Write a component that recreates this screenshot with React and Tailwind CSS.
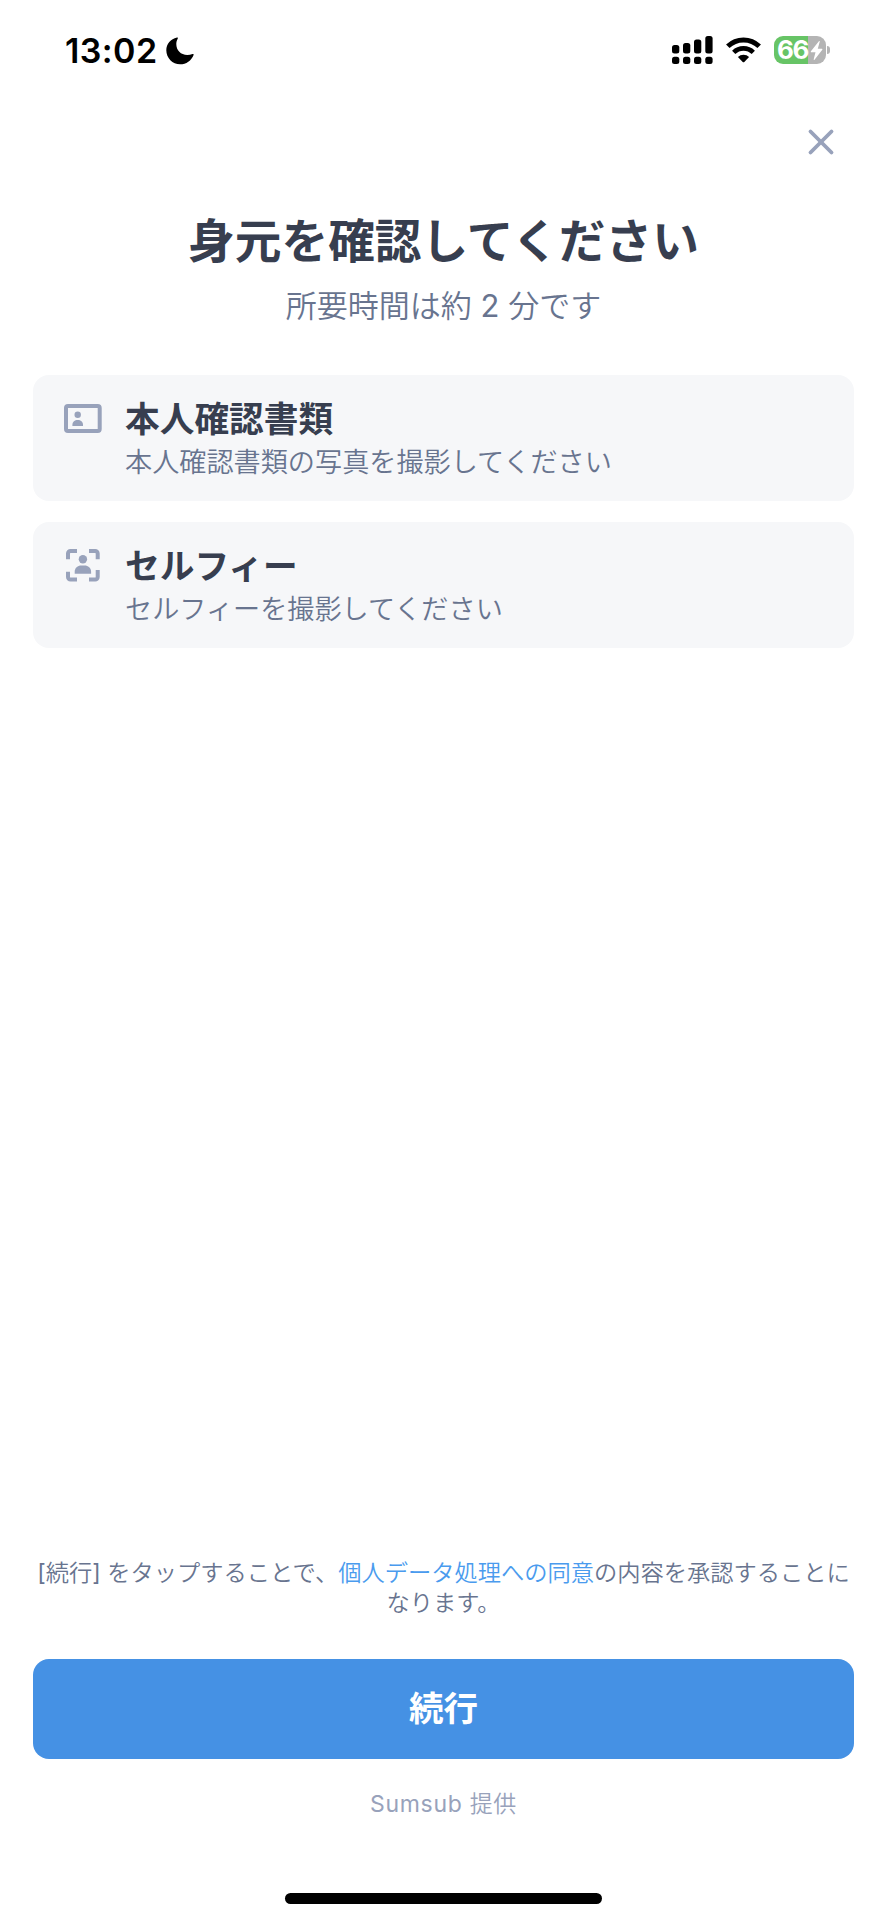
import { X } from "lucide-react"

const steps = [
  {
    id: "document",
    title: "本人確認書類",
    description: "本人確認書類の写真を撮影してください",
    icon: DocumentIcon,
  },
  {
    id: "selfie",
    title: "セルフィー",
    description: "セルフィーを撮影してください",
    icon: SelfieIcon,
  },
]

function DocumentIcon() {
  return (
    <svg className="w-10 h-10" viewBox="0 0 40 40">
      <rect x="3" y="7" width="33.700" height="25" rx="2" fill="none" stroke="currentColor" strokeWidth="4" />
      <circle cx="14.700" cy="15.700" r="3.200" fill="currentColor" />
      <path d="M9.400 27v-1.200c0-2.800 2.300-4.800 5.300-4.800s5.300 2 5.300 4.800V27z" fill="currentColor" />
    </svg>
  )
}

function SelfieIcon() {
  return (
    <svg className="w-10 h-10" viewBox="0 0 40 40">
      <path
        d="M5 13.300V7.500A2.500 2.500 0 0 1 7.500 5H14M26 5h6.200A2.500 2.500 0 0 1 34.700 7.500V13.300M34.700 24V31A2.500 2.500 0 0 1 32.200 33.500H26M14 33.500H7.500A2.500 2.500 0 0 1 5 31V25.800"
        fill="none"
        stroke="currentColor"
        strokeWidth="4"
      />
      <circle cx="19.900" cy="13.200" r="4.200" fill="currentColor" />
      <path d="M11.700 27.700v-2c0-3.700 3-6.200 6.500-6.200h3.400c3.500 0 6.500 2.500 6.500 6.200v2z" fill="currentColor" />
    </svg>
  )
}

function StatusBar() {
  return (
    <div className="flex items-center justify-between h-[100px] pl-[65px] pr-[57px] text-black">
      <div className="flex items-center gap-[9px] pt-[1px]">
        <span className="font-['Inter',sans-serif] text-[34px] leading-none font-semibold tracking-[0.4px]">13:02</span>
        <svg className="w-7 h-7" viewBox="0 0 28 28" fill="currentColor">
          <path d="M11 .6C4.700 1.900.3 7.100.3 13.300.3 21.100 6.500 27.300 14.100 27.300c6.200 0 11.300-3.700 13.500-9.400.2-.8-.4-1.200-1.100-.9-1.600.7-3.400 1-5.200 1C14.800 18 10.300 13.500 10.300 7.100c0-2.100.5-3.900 1.400-5.400.4-.7 0-1.300-.7-1.100z" />
        </svg>
      </div>

      <div className="flex items-center">
        <svg className="w-[41px] h-7" viewBox="0 0 41 28" fill="currentColor">
          <rect x="0" y="9" width="7.300" height="8.500" rx="2.500" />
          <rect x="11" y="7" width="7.300" height="10.500" rx="2.500" />
          <rect x="22" y="3.500" width="7.300" height="14" rx="2.500" />
          <rect x="33.300" y="0" width="7.300" height="17.500" rx="2.500" />
          <rect x="0" y="20.700" width="7.300" height="7.300" rx="2.500" />
          <rect x="11" y="20.700" width="7.300" height="7.300" rx="2.500" />
          <rect x="22" y="20.700" width="7.300" height="7.300" rx="2.500" />
          <rect x="33.300" y="20.700" width="7.300" height="7.300" rx="2.500" />
        </svg>
        <svg className="w-[35px] h-[26px] ml-[13px]" viewBox="0 0 35 26">
          <path d="M1.800 9.300a22.500 22.500 0 0 1 31.400 0" fill="none" stroke="currentColor" strokeWidth="5" />
          <path d="M7.700 15.400a14 14 0 0 1 19.600 0" fill="none" stroke="currentColor" strokeWidth="4.600" />
          <path d="M11.900 20a8 8 0 0 1 11.200 0l-4.800 4.900q-.8.800-1.600 0z" fill="currentColor" />
        </svg>
        <div className="flex items-center ml-[13px]">
          <div className="flex items-center justify-center w-[52px] h-7 rounded-[9px] bg-[linear-gradient(90deg,#67c466_66%,#b4b4b4_66%)] text-white">
            <span className="font-['Inter',sans-serif] text-[26px] leading-none font-bold tracking-[-1.500px]">66</span>
            <svg className="w-[13px] h-[19px] ml-[2px]" viewBox="0 0 12 19" fill="currentColor">
              <path d="M8.400.3.400 10.300c-.3.400 0 .9.400.9h4.200L3.200 18.200c-.2.700.4.900.8.500l7.800-10c.3-.4 0-.9-.4-.9H7.300L9.200.8c.2-.7-.4-.9-.8-.5z" />
            </svg>
          </div>
          <div className="w-[3px] h-2 ml-[1px] rounded-r-full bg-[#b4b4b4]" />
        </div>
      </div>
    </div>
  )
}

function StepCard({ step }) {
  const Icon = step.icon
  return (
    <li className="flex gap-[22px] h-[126px] pl-[30px] rounded-[16px] bg-[#f6f7f9]">
      <div className="pt-[24px] text-[#98a2bb]">
        <Icon />
      </div>
      <div className="pt-5">
        <h2 className="text-[34.700px] leading-[48px] font-bold text-[#373e4f]">{step.title}</h2>
        <p className="text-[27.150px] leading-[40px] font-[350] text-[#68748f]">{step.description}</p>
      </div>
    </li>
  )
}

export default function App() {
  return (
    <div className="flex flex-col w-[887px] h-[1920px] bg-white font-['Inter','Noto_Sans_CJK_JP',sans-serif]" lang="ja">
      <StatusBar />

      <div className="flex justify-end h-[85px] pt-[21px] pr-[45px]">
        <button type="button" aria-label="閉じる" className="w-[42px] h-[42px] text-[#98a2bb]">
          <X className="w-[42px] h-[42px]" strokeWidth={2.2} />
        </button>
      </div>

      <header className="h-[190px] pt-[24px] text-center">
        <h1 className="text-[46.700px] leading-[64px] font-bold text-[#373e4f]">身元を確認してください</h1>
        <p className="pt-[11px] text-[31px] leading-[44px] font-[350] text-[#68748f]">
          所要時間は約 <span className="font-normal">2</span> 分です
        </p>
      </header>

      <main className="flex-1 px-[33px]">
        <ul className="flex flex-col gap-[21px]">
          {steps.map((step) => (
            <StepCard key={step.id} step={step} />
          ))}
        </ul>
      </main>

      <footer className="flex flex-col items-center h-[362px] px-[33px]">
        <p className="text-[23.250px] leading-[30px] text-center font-[350] text-[#68748f]">
          <span className="font-normal">[</span>続行<span className="font-normal">]</span> をタップすることで、
          <a className="text-[#4a9bee]">個人データ処理への同意</a>の内容を承認することになります。
        </p>
        <button
          type="button"
          className="w-full h-[100px] mt-[41px] pt-[1px] rounded-[16px] bg-[#4591e4] text-[34.500px] leading-none font-bold text-white"
        >
          続行
        </button>
        <p className="pt-[29px] text-[23px] leading-[32px] tracking-[0.7px] font-[350] text-[#98a2bb]">
          <span className="font-normal">Sumsub</span> 提供
        </p>
        <div className="w-[317px] h-[11px] mt-auto mb-4 rounded-full bg-black" />
      </footer>
    </div>
  )
}
